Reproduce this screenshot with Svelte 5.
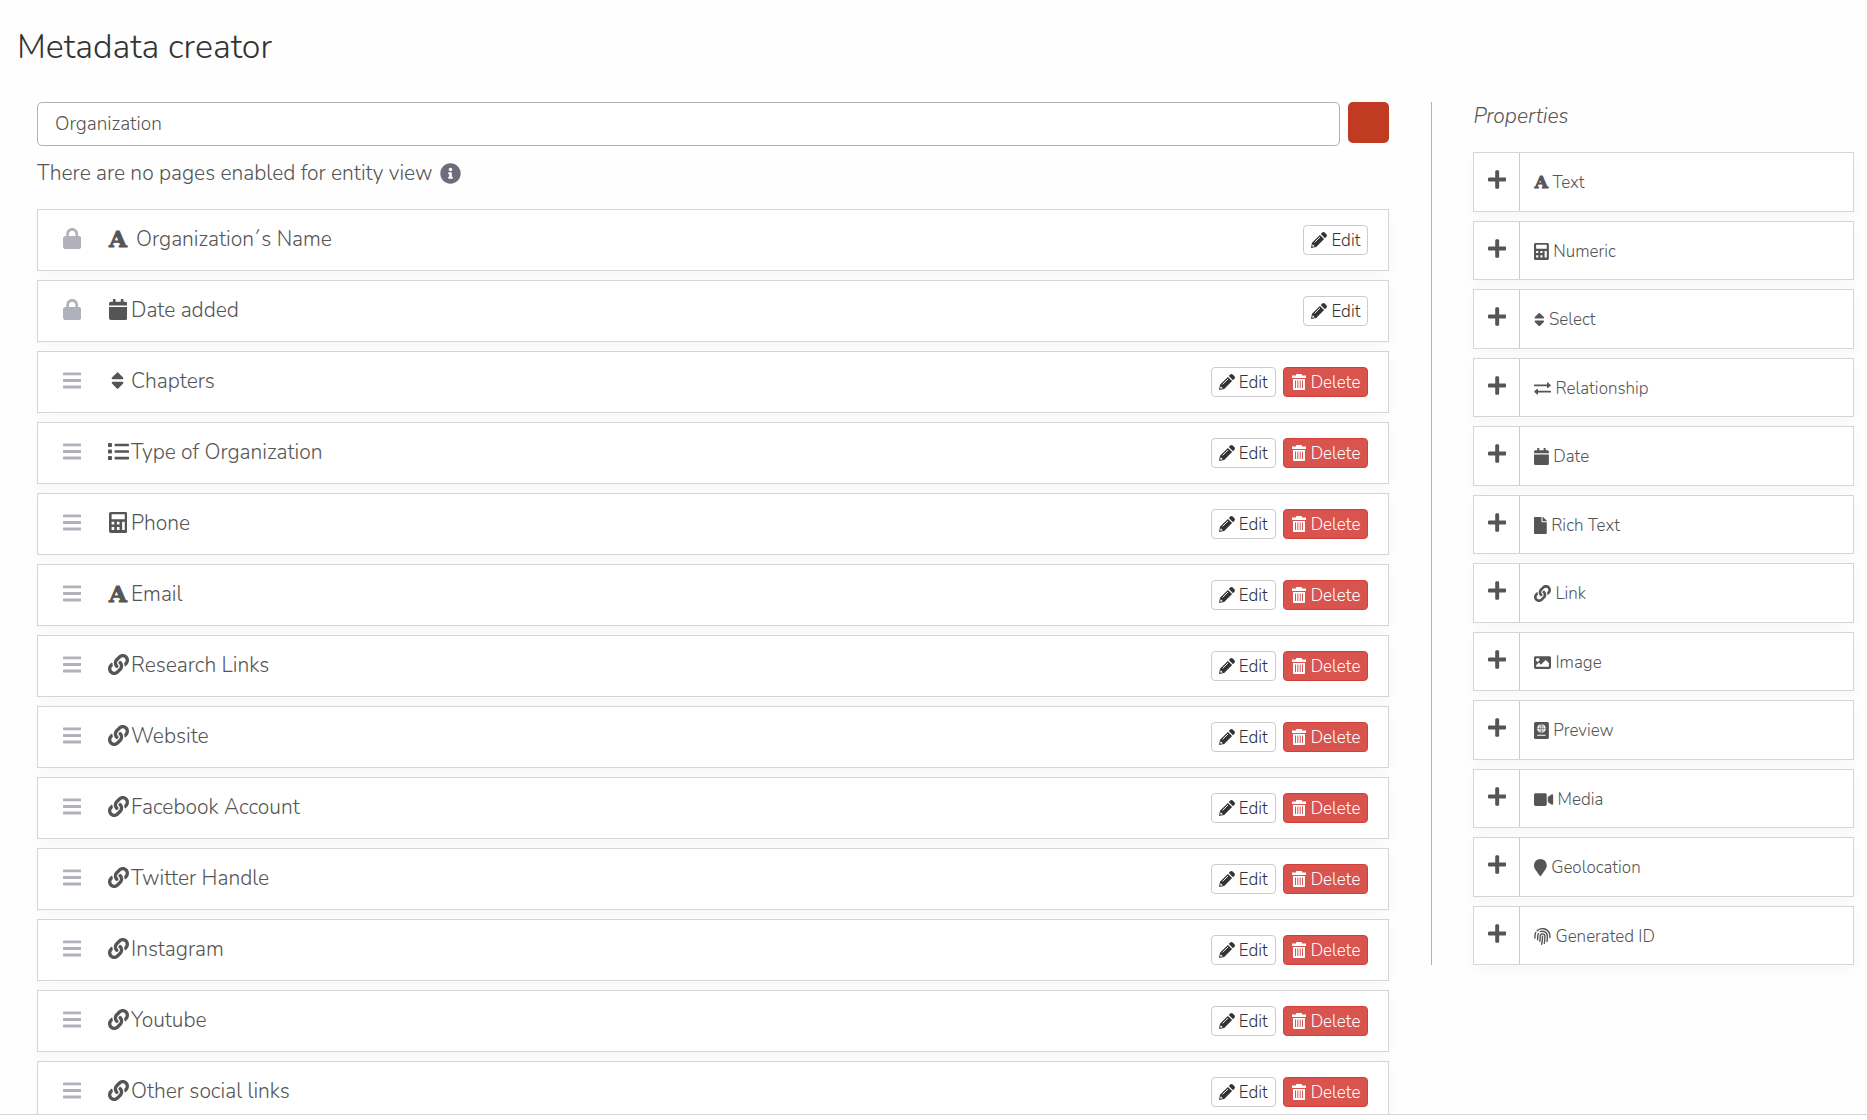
<script lang="ts">
  interface Field {
    label: string;
    icon: string;
    locked?: boolean;
    title?: boolean;
  }

  const icons: Record<string, { width: number; path: string }> = {
    lock: {
      width: 448,
      path: 'M144 144v48H304V144c0-44.2-35.8-80-80-80s-80 35.8-80 80zM80 192V144C80 64.5 144.5 0 224 0s144 64.5 144 144v48h16c35.3 0 64 28.7 64 64V448c0 35.3-28.7 64-64 64H64c-35.3 0-64-28.7-64-64V256c0-35.3 28.7-64 64-64H80z'
    },
    bars: {
      width: 448,
      path: 'M16 58H432c9 0 16 7 16 16v40c0 9-7 16-16 16H16c-9 0-16-7-16-16V74c0-9 7-16 16-16zM16 218H432c9 0 16 7 16 16v40c0 9-7 16-16 16H16c-9 0-16-7-16-16v-40c0-9 7-16 16-16zM16 378H432c9 0 16 7 16 16v40c0 9-7 16-16 16H16c-9 0-16-7-16-16v-40c0-9 7-16 16-16z'
    },
    calendar: {
      width: 448,
      path: 'M0 464c0 26.500 21.500 48 48 48h352c26.500 0 48-21.500 48-48V192H0zM400 64h-48V12c0-6.600-5.400-12-12-12h-40c-6.600 0-12 5.400-12 12v52H160V12c0-6.600-5.400-12-12-12h-40c-6.600 0-12 5.400-12 12v52H48C21.500 64 0 85.500 0 112v48h448v-48c0-26.500-21.500-48-48-48z'
    },
    select: {
      width: 320,
      path: 'M41 288h238c21.400 0 32.100 25.900 17 41L177 448c-9.400 9.400-24.600 9.400-33.900 0L24 329c-15.100-15.100-4.400-41 17-41zm255-105L177 64c-9.400-9.400-24.600-9.400-33.900 0L24 183c-15.100 15.100-4.400 41 17 41h238c21.400 0 32.100-25.900 17-41z'
    },
    list: {
      width: 512,
      path: 'M16 48h64c9 0 16 7 16 16v64c0 9-7 16-16 16H16c-9 0-16-7-16-16V64c0-9 7-16 16-16zM16 208h64c9 0 16 7 16 16v64c0 9-7 16-16 16H16c-9 0-16-7-16-16v-64c0-9 7-16 16-16zM16 368h64c9 0 16 7 16 16v64c0 9-7 16-16 16H16c-9 0-16-7-16-16v-64c0-9 7-16 16-16zM176 64h320c9 0 16 7 16 16v32c0 9-7 16-16 16H176c-9 0-16-7-16-16V80c0-9 7-16 16-16zM176 224h320c9 0 16 7 16 16v32c0 9-7 16-16 16H176c-9 0-16-7-16-16v-32c0-9 7-16 16-16zM176 384h320c9 0 16 7 16 16v32c0 9-7 16-16 16H176c-9 0-16-7-16-16v-32c0-9 7-16 16-16z'
    },
    numeric: {
      width: 448,
      path: 'M48 0h352c26.500 0 48 21.500 48 48v416c0 26.500-21.500 48-48 48H48c-26.500 0-48-21.500-48-48V48C0 21.500 21.500 0 48 0zM64 56v120h320V56zM64 240v64h64v-64zM192 240v64h64v-64zM64 368v72h64v-72zM192 368v72h64v-72zM320 240v200h64V240z'
    },
    link: {
      width: 512,
      path: 'M326.612 185.391c59.747 59.809 58.927 155.698.36 214.590-.11.12-.24.25-.36.37l-67.200 67.200c-59.270 59.270-155.699 59.262-214.960 0-59.270-59.260-59.270-155.700 0-214.960l37.106-37.106c9.840-9.840 26.786-3.300 27.294 10.606.648 17.722 3.826 35.527 9.690 52.721 1.986 5.822.567 12.262-3.783 16.612l-13.087 13.087c-28.026 28.026-28.905 73.660-1.155 101.960 28.024 28.579 74.086 28.749 102.325.51l67.200-67.190c28.191-28.191 28.073-73.757 0-101.830-3.701-3.694-7.429-6.564-10.341-8.569a16.037 16.037 0 0 1-6.947-12.606c-.396-10.567 3.348-21.456 11.698-29.806l21.054-21.055c5.521-5.521 14.182-6.199 20.584-1.731a152.482 152.482 0 0 1 20.522 17.197zM467.547 44.449c-59.261-59.262-155.690-59.270-214.960 0l-67.200 67.200c-.12.12-.25.25-.36.37-58.566 58.892-59.387 154.781.36 214.590a152.454 152.454 0 0 0 20.521 17.196c6.402 4.468 15.064 3.789 20.584-1.731l21.054-21.055c8.350-8.350 12.094-19.239 11.698-29.806a16.037 16.037 0 0 0-6.947-12.606c-2.912-2.005-6.640-4.875-10.341-8.569-28.073-28.073-28.191-73.639 0-101.830l67.200-67.190c28.239-28.239 74.300-28.069 102.325.51 27.750 28.300 26.872 73.934-1.155 101.960l-13.087 13.087c-4.350 4.350-5.769 10.790-3.783 16.612 5.864 17.194 9.042 34.999 9.690 52.721.509 13.906 17.454 20.446 27.294 10.606l37.106-37.106c59.271-59.259 59.271-155.699.001-214.959z'
    },
    plus: {
      width: 448,
      path: 'M416 208H272V64c0-17.700-14.300-32-32-32h-32c-17.700 0-32 14.300-32 32v144H32c-17.700 0-32 14.300-32 32v32c0 17.700 14.300 32 32 32h144v144c0 17.700 14.300 32 32 32h32c17.700 0 32-14.300 32-32V304h144c17.700 0 32-14.300 32-32v-32c0-17.700-14.300-32-32-32z'
    },
    relationship: {
      width: 512,
      path: 'M0 170v-20c0-9 7-16 16-16h376V88c0-16 18-22 28-12l82 72c8 7 8 17 0 24l-82 72c-10 10-28 4-28-12v-46H16c-9 0-16-7-16-16zM512 342v20c0 9-7 16-16 16H120v46c0 16-18 22-28 12l-82-72c-8-7-8-17 0-24l82-72c10-10 28-4 28 12v46h376c9 0 16 7 16 16z'
    },
    file: {
      width: 384,
      path: 'M224 136V0H24C10.700 0 0 10.700 0 24v464c0 13.300 10.700 24 24 24h336c13.300 0 24-10.700 24-24V160H248c-13.200 0-24-10.800-24-24zm160-14.100v6.100H256V0h6.100c6.400 0 12.500 2.500 17 7l97.900 98c4.500 4.500 7 10.600 7 16.900z'
    },
    image: {
      width: 512,
      path: 'M464 448H48c-26.500 0-48-21.500-48-48V112c0-26.500 21.500-48 48-48h416c26.500 0 48 21.500 48 48v288c0 26.500-21.500 48-48 48zM112 120c-30.900 0-56 25.100-56 56s25.100 56 56 56 56-25.100 56-56-25.100-56-56-56zM64 384h384V272l-87.500-87.500c-4.700-4.700-12.300-4.700-17 0L208 320l-55.500-55.500c-4.700-4.700-12.300-4.700-17 0L64 336v48z'
    },
    video: {
      width: 576,
      path: 'M336.200 64H47.800C21.400 64 0 85.400 0 111.800v288.400C0 426.600 21.400 448 47.800 448h288.400c26.400 0 47.800-21.400 47.800-47.800V111.800c0-26.400-21.400-47.800-47.800-47.800zm189.400 37.700L416 177.300v157.400l109.600 75.500c21.200 14.600 50.400-.3 50.400-25.800V127.500c0-25.400-29.100-40.400-50.400-25.800z'
    },
    marker: {
      width: 384,
      path: 'M172.300 501.700C27 291 0 269.400 0 192 0 86 86 0 192 0s192 86 192 192c0 77.400-27 99-172.300 309.700-9.500 13.800-29.900 13.800-39.400 0z'
    },
    info: {
      width: 512,
      path: 'M256 8C119 8 8 119.100 8 256c0 137 111 248 248 248s248-111 248-248C504 119.100 393 8 256 8zm0 110c23.200 0 42 18.800 42 42s-18.800 42-42 42-42-18.800-42-42 18.800-42 42-42zm56 254c0 6.600-5.400 12-12 12h-88c-6.600 0-12-5.400-12-12v-24c0-6.600 5.400-12 12-12h12v-64h-12c-6.600 0-12-5.400-12-12v-24c0-6.600 5.400-12 12-12h64c6.600 0 12 5.400 12 12v100h12c6.600 0 12 5.400 12 12v24z'
    }
  };

  const fields: Field[] = [
    { label: 'Organization´s Name', icon: 'text', locked: true, title: true },
    { label: 'Date added', icon: 'calendar', locked: true },
    { label: 'Chapters', icon: 'select' },
    { label: 'Type of Organization', icon: 'list' },
    { label: 'Phone', icon: 'numeric' },
    { label: 'Email', icon: 'text' },
    { label: 'Research Links', icon: 'link' },
    { label: 'Website', icon: 'link' },
    { label: 'Facebook Account', icon: 'link' },
    { label: 'Twitter Handle', icon: 'link' },
    { label: 'Instagram', icon: 'link' },
    { label: 'Youtube', icon: 'link' },
    { label: 'Other social links', icon: 'link' }
  ];

  const properties = [
    { label: 'Text', icon: 'text' },
    { label: 'Numeric', icon: 'numeric' },
    { label: 'Select', icon: 'select' },
    { label: 'Relationship', icon: 'relationship' },
    { label: 'Date', icon: 'calendar' },
    { label: 'Rich Text', icon: 'file' },
    { label: 'Link', icon: 'link' },
    { label: 'Image', icon: 'image' },
    { label: 'Preview', icon: 'preview' },
    { label: 'Media', icon: 'video' },
    { label: 'Geolocation', icon: 'marker' },
    { label: 'Generated ID', icon: 'fingerprint' }
  ];

  let name = $state('Organization');
</script>

{#snippet icon(id: string)}
  {#if id === 'text'}
    <span class="icon letter" aria-hidden="true">A</span>
  {:else if id === 'preview'}
    <svg class="icon" viewBox="0 0 448 512" aria-hidden="true">
      <rect width="448" height="512" rx="48" fill="currentColor" />
      <circle cx="224" cy="192" r="128" fill="#fff" />
      <g fill="none" stroke="currentColor" stroke-width="18">
        <ellipse cx="224" cy="192" rx="56" ry="128" />
        <path d="M224 64v256M96 192h256" />
      </g>
      <path d="M112 400h224" stroke="#fff" stroke-width="32" stroke-linecap="round" />
    </svg>
  {:else if id === 'fingerprint'}
    <svg class="icon" viewBox="0 0 512 512" aria-hidden="true">
      <g fill="none" stroke="currentColor" stroke-width="42" stroke-linecap="round">
        <path d="M256 246c2 80-6 160-28 242" />
        <path d="M176 400c10-50 12-96 10-154 0-40 30-70 70-70s72 32 72 72c2 74-4 150-18 216" />
        <path d="M108 356c5-36 6-70 4-108 0-30 8-56 24-78M190 112c80-34 212 4 212 136 0 56 0 100-8 152" />
        <path d="M26 304c12-60-8-100 24-164M94 86c110-110 300-74 364 54 20 44 24 88 22 148" />
      </g>
    </svg>
  {:else}
    <svg class="icon" viewBox="0 0 {icons[id].width} 512" aria-hidden="true">
      <path d={icons[id].path} fill="currentColor" fill-rule="evenodd" />
    </svg>
  {/if}
{/snippet}

{#snippet editButton()}
  <button type="button" class="btn">
    <svg class="btn-icon" viewBox="0 0 16 16" aria-hidden="true">
      <path
        d="M0 16l1-5.200 7.900-7.900 4.200 4.200L5.200 15zM9.800 2l1.400-1.400c.7-.7 1.800-.7 2.500 0l1.700 1.700c.7.7.7 1.800 0 2.500L14 6.200z"
        fill="currentColor"
      />
      <path d="M3.600 10.400L9 5" stroke="#fff" stroke-width=".9" />
      <path d="M1.700 12.200l2.100 2.100-2 .5-.6-.6z" fill="#fff" />
    </svg>
    Edit
  </button>
{/snippet}

<div class="app">
  <main class="content">
    <h1>Metadata creator</h1>

    <div class="creator">
      <section class="entity">
        <div class="name-row">
          <input type="text" aria-label="Name" bind:value={name} />
          <button type="button" class="color" aria-label="Color"></button>
        </div>

        <div class="view-info">
          There are no pages enabled for entity view
          {@render icon('info')}
        </div>

        <ul class="fields">
          {#each fields as field}
            <li class="field">
              <span class="handle">{@render icon(field.locked ? 'lock' : 'bars')}</span>
              <span class="type">{@render icon(field.icon)}</span>
              <span class="field-name" class:title={field.title}>{field.label}</span>
              <div class="actions">
                {@render editButton()}
                {#if !field.locked}
                  <button type="button" class="btn danger">
                    <svg class="btn-icon" viewBox="0 0 16 16" aria-hidden="true">
                      <path
                        d="M1 1.500h4V1c0-.6.400-1 1-1h4c.6 0 1 .4 1 1v.5h4V4H1zM2 5h12v10c0 .6-.4 1-1 1H3c-.6 0-1-.4-1-1zM4 6.500v7.500h1V6.500zM6.300 6.500v7.500h1V6.500zM8.700 6.500v7.500h1V6.500zM11 6.500v7.500h1V6.500z"
                        fill="currentColor"
                        fill-rule="evenodd"
                      />
                    </svg>
                    Delete
                  </button>
                {/if}
              </div>
            </li>
          {/each}
        </ul>
      </section>

      <aside class="sidebar">
        <h2>Properties</h2>
        <ul class="properties">
          {#each properties as property}
            <li class="property">
              <button type="button" class="add" aria-label="Add {property.label}">
                {@render icon('plus')}
              </button>
              <span class="property-name">{@render icon(property.icon)} {property.label}</span>
            </li>
          {/each}
        </ul>
      </aside>
    </div>
  </main>
  <footer></footer>
</div>

<style>
  :global(body) {
    background: #fefefe;
  }

  .app {
    display: flex;
    flex-direction: column;
    height: 100vh;
    color: #555;
    font-family: Nunito, Lato, sans-serif;
    font-size: 21px;
    font-weight: 300;
    line-height: 30px;
  }

  .content {
    flex: 1;
    min-height: 0;
    overflow: hidden;
  }

  footer {
    height: 5px;
    border-top: 1px solid #d6d6da;
    background: #fff;
  }

  h1 {
    margin: 26px 17px 34px;
    color: #333;
    font-size: 34px;
    font-weight: 300;
    line-height: 42px;
  }

  h2 {
    margin: 0 0 22px;
    font-size: 21px;
    font-weight: 300;
    font-style: italic;
    line-height: 28px;
  }

  ul {
    margin: 0;
    padding: 0;
    list-style: none;
  }

  button,
  input {
    font-family: inherit;
    font-weight: inherit;
  }

  .icon {
    display: inline-block;
    flex: none;
    height: 1em;
  }

  .letter {
    display: inline-flex;
    justify-content: center;
    align-items: center;
    width: 14px;
    font-family: 'DejaVu Serif', serif;
    font-weight: 700;
    line-height: 1;
    -webkit-text-stroke: 1px currentColor;
  }

  .creator {
    display: grid;
    grid-template-columns: minmax(0, 16fr) minmax(0, 5fr);
    align-items: start;
    gap: 42px;
    padding: 0 13px 0 37px;
  }

  .name-row {
    display: flex;
    align-items: flex-start;
    gap: 8px;
  }

  input {
    flex: 1;
    min-width: 0;
    height: 44px;
    box-sizing: border-box;
    padding: 0 17px;
    border: 1px solid #b1b1bb;
    border-radius: 5px;
    background: #fff;
    color: #555;
    font-size: 19px;
  }

  .color {
    width: 41px;
    height: 41px;
    border: 0;
    border-radius: 5px;
    background: #c03b22;
  }

  .view-info {
    display: flex;
    align-items: center;
    gap: 7px;
    margin: 12px 0 21px;
  }

  .view-info .icon {
    color: #6d6c7d;
  }

  .field,
  .property {
    border: 1px solid #d4d5da;
    background: #fff;
    box-shadow: 0 5px 14px rgba(0, 0, 0, 0.03);
  }

  .field {
    display: flex;
    align-items: center;
    height: 60px;
    margin-bottom: 9px;
    padding: 0 20px 0 21px;
  }

  .handle,
  .type {
    display: flex;
    justify-content: center;
    width: 26px;
    padding-bottom: 4px;
  }

  .type .letter {
    font-size: 23px;
  }

  .field-name {
    padding-bottom: 2px;
  }

  .handle {
    margin-right: 20px;
    color: #b1b1bb;
  }

  .field-name.title {
    margin-left: 5px;
  }

  .actions {
    display: flex;
    gap: 7px;
    margin-left: auto;
  }

  .btn {
    display: flex;
    align-items: center;
    gap: 4px;
    height: 30px;
    padding: 0 7px;
    border: 1px solid #ccc;
    border-radius: 4px;
    background: #fff;
    color: #333;
    font-size: 17px;
  }

  .btn.danger {
    border-color: #d43f3a;
    background: #d9534f;
    color: #fff;
  }

  .btn-icon {
    width: 16px;
    height: 16px;
  }

  .sidebar {
    padding-left: 41px;
    border-left: 1px solid #b1b1bb;
  }

  .property {
    display: flex;
    font-size: 17px;
    line-height: 1.5;
  }

  .property + .property {
    margin-top: 9px;
  }

  .add {
    display: flex;
    justify-content: center;
    align-items: center;
    width: 46px;
    padding: 0 0 4px;
    border: 0;
    border-right: 1px solid #ccc;
    background: none;
    color: #555;
    font-size: 21px;
  }

  .property-name {
    display: flex;
    align-items: center;
    gap: 4px;
    padding: 17px 14px 15px;
  }
</style>
